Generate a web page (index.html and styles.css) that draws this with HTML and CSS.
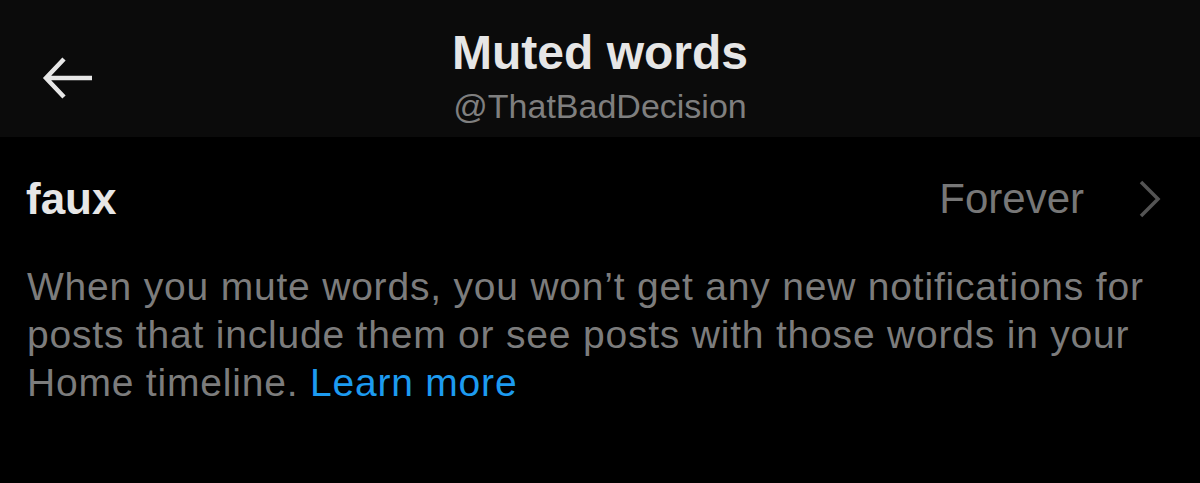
FILE: index.html
```html
<!DOCTYPE html>
<html>
<head>
  <title>Muted words</title>
  <link rel="stylesheet" href="styles.css">
</head>
<body>

  <div class="top-bar">
    <div class="back-btn">
      <svg width="52" height="44" viewBox="0 0 52 44">
        <path d="M22 3 L4 22 L22 41 M4 22 H50" fill="none" stroke="#e7e7e7" stroke-width="4.5"/>
      </svg>
    </div>
    <div class="title-block">
      <h1>Muted words</h1>
      <p class="handle">@ThatBadDecision</p>
    </div>
    <div></div>
  </div>

  <div class="word-row">
    <span class="word">faux</span>
    <div class="duration">
      <span>Forever</span>
      <svg width="24" height="38" viewBox="0 0 24 38">
        <path d="M3 2 L20 19 L3 36" fill="none" stroke="#545454" stroke-width="3.5"/>
      </svg>
    </div>
  </div>

  <p class="info">
    When you mute words, you won’t get any new notifications for posts that include them or see posts with those words in your Home timeline. <a href="#">Learn more</a>
  </p>

</body>
</html>
```

FILE: styles.css
```css
body {
  background-color: #000;
  color: #e7e7e7;
  font-family: "Liberation Sans", Arial, sans-serif;
  margin: 0;
}

.top-bar {
  background-color: #0b0b0b;
  height: 137px;
  display: grid;
  grid-template-columns: 1fr auto 1fr;
  align-items: start;
}

.back-btn {
  padding: 56px 0 0 42px;
}

.back-btn svg {
  display: block;
}

.title-block {
  text-align: center;
  padding-top: 24px;
}

.title-block h1 {
  margin: 0;
  font-size: 48px;
  line-height: 58px;
  font-weight: bold;
  color: #e6e6e6;
}

.handle {
  margin: 4px 0 0;
  font-size: 34px;
  line-height: 40px;
  color: #7f7f7f;
}

.word-row {
  display: flex;
  justify-content: space-between;
  align-items: center;
  padding: 30px 38px 0 26px;
  height: 64px;
}

.word {
  font-size: 44px;
  font-weight: bold;
  color: #e6e6e6;
}

.duration {
  display: flex;
  align-items: center;
  gap: 54px;
  font-size: 42px;
  color: #777;
}

.duration svg {
  display: block;
}

.info {
  margin: 32px 0 0;
  padding: 0 28px 0 27px;
  font-size: 39px;
  letter-spacing: 0.8px;
  line-height: 48px;
  color: #7c7c7c;
}

.info a {
  color: #1d9bf0;
  text-decoration: none;
}
```
